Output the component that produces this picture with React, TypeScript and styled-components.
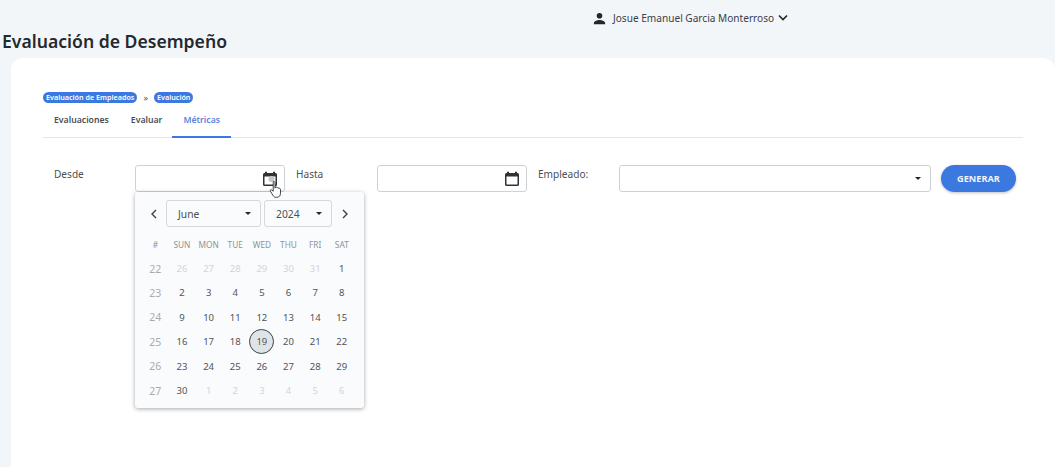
import { Fragment } from "react";
import styled, { createGlobalStyle } from "styled-components";

const GlobalStyle = createGlobalStyle`
  html, body {
    margin: 0;
    padding: 0;
    height: 467px;
    overflow: hidden;
    background: #f3f6f9;
    font-family: "Noto Sans", "Open Sans", sans-serif;
  }
`;

const Page = styled.div`
  display: flex;
  flex-direction: column;
  height: 467px;
  overflow: hidden;
`;

const TopBar = styled.div`
  display: flex;
  align-items: center;
  height: 36px;
  padding-left: 592px;
  gap: 5px;
  font-size: 10.1px;
  color: #3a4047;
`;

const UserName = styled.span`
  margin-left: 1px;
`;

const UserChevron = styled.svg`
  margin-left: -1px;
`;

const Title = styled.h1`
  margin: 0;
  height: 22px;
  padding-left: 2px;
  font-size: 17.6px;
  line-height: 10px;
  font-weight: 600;
  color: #24292f;
`;

const Card = styled.div`
  flex: 1;
  margin-left: 11px;
  padding: 33px 32px 0 32px;
  background: #fff;
  border-radius: 12px 12px 0 0;
`;

const Crumbs = styled.div`
  display: flex;
  align-items: center;
  height: 12px;
  gap: 6px;
  font-size: 9px;
  color: #555;
`;

const Pill = styled.span`
  padding: 0 3px;
  height: 11px;
  line-height: 11px;
  border-radius: 6px;
  background: #3b78e0;
  color: #fff;
  font-size: 7.2px;
  font-weight: 600;
`;

const Tabs = styled.div`
  display: flex;
  height: 34px;
  border-bottom: 1px solid #e4e7ea;
`;

const Tab = styled.div<{ $active?: boolean }>`
  display: flex;
  align-items: center;
  padding: 0 11px;
  margin-left: ${(p) => (p.$active ? "-1px" : "0")};
  height: ${(p) => (p.$active ? "35px" : "34px")};
  box-sizing: border-box;
  font-size: 8.7px;
  font-weight: 600;
  color: ${(p) => (p.$active ? "#5a85dc" : "#4a4f55")};
  border-bottom: ${(p) => (p.$active ? "2px solid #3b78e0" : "none")};
`;

const FilterRow = styled.div`
  display: flex;
  align-items: flex-start;
  margin-top: 27px;
  position: relative;
`;

const Label = styled.div<{ $ml: number }>`
  width: 81px;
  margin-left: ${(p) => p.$ml}px;
  padding-top: 2px;
  font-size: 10.1px;
  line-height: 14px;
  color: #4a4f55;
`;

const Field = styled.div<{ $w: number }>`
  display: flex;
  align-items: center;
  justify-content: flex-end;
  width: ${(p) => p.$w}px;
  height: 27px;
  box-sizing: border-box;
  border: 1px solid #cfd2d5;
  border-radius: 3px;
  background: #fff;
  padding-right: 6px;
`;

const GenerateButton = styled.button`
  width: 75px;
  height: 27px;
  margin-left: 10px;
  border: none;
  border-radius: 14px;
  background: #3b78e0;
  box-shadow: 0 1px 3px rgba(0, 0, 0, 0.25);
  color: #eef3fc;
  font-family: inherit;
  font-size: 9.2px;
  font-weight: 700;
`;

const Caret = styled.span`
  width: 0;
  height: 0;
  margin-right: 3.5px;
  border-left: 3.5px solid transparent;
  border-right: 3.5px solid transparent;
  border-top: 3.5px solid #23272b;
`;

const Popover = styled.div`
  position: absolute;
  left: 92px;
  top: 27px;
  width: 229px;
  height: 216px;
  box-sizing: border-box;
  background: #fafbfd;
  border-radius: 3px;
  box-shadow: 0 1px 4px rgba(0, 0, 0, 0.35);
  z-index: 2;
`;

const MonthBar = styled.div`
  display: flex;
  align-items: center;
  height: 27px;
  padding: 8px 0 0 13px;
`;

const NavButton = styled.span<{ $ml?: number }>`
  display: flex;
  width: 12px;
  margin-left: ${(p) => p.$ml ?? 0}px;
  justify-content: center;
  color: #3a3f44;
`;

const SelectBox = styled.div<{ $w: number; $ml: number }>`
  display: flex;
  align-items: center;
  justify-content: space-between;
  box-sizing: border-box;
  width: ${(p) => p.$w}px;
  height: 27px;
  margin-left: ${(p) => p.$ml}px;
  padding: 0 6px 0 11px;
  border: 1px solid #d5d8db;
  border-radius: 3px;
  font-size: 10.3px;
  color: #4a4f55;
`;

const DayGrid = styled.div`
  display: grid;
  grid-template-columns: repeat(8, 26.65px);
  grid-auto-rows: 24.4px;
  margin: 5px 0 0 7px;
`;

const Cell = styled.div<{ $tone: "head" | "week" | "out" | "in" }>`
  display: flex;
  align-items: center;
  justify-content: center;
  font-size: ${(p) => (p.$tone === "head" ? "8.3px" : p.$tone === "week" ? "10.5px" : "9.5px")};
  color: ${(p) =>
    p.$tone === "head" ? "#8f9397" : p.$tone === "week" ? "#a8abae" : p.$tone === "out" ? "#d3d5d7" : "#505357"};
`;

const TodayMark = styled.span`
  display: flex;
  align-items: center;
  justify-content: center;
  width: 23px;
  height: 23px;
  border: 1px solid #3f4347;
  border-radius: 50%;
  background: #dfe4e8;
`;

const HandCursor = styled.svg`
  position: absolute;
  left: 226px;
  top: 15px;
  z-index: 3;
`;

const CalendarIcon = ({ busy }: { busy?: boolean }) => (
  <svg width="16" height="16" viewBox="0 0 16 16">
    <path
      d="M1 3.5A1.5 1.5 0 0 1 2.5 2H3V.8h2V2h6V.8h2V2h.5A1.5 1.5 0 0 1 15 3.5v10a1.5 1.5 0 0 1-1.5 1.5h-11A1.5 1.5 0 0 1 1 13.5z"
      fill="#2e3338"
    />
    <rect x="2.5" y="5.5" width="11" height="8" fill="#fff" />
    {busy && <circle cx="9.5" cy="8" r="3" fill="#c4c7ca" />}
  </svg>
);

const Chevron = ({ dir }: { dir: "left" | "right" }) => (
  <svg width="8" height="10" viewBox="0 0 8 10" fill="none" stroke="currentColor" strokeWidth="1.4">
    <path d={dir === "left" ? "M6 1 2 5l4 4" : "M2 1l4 4-4 4"} />
  </svg>
);

const heads = ["#", "SUN", "MON", "TUE", "WED", "THU", "FRI", "SAT"];

type Day = { n: number; out?: boolean };
const r = (a: number, b: number, out?: boolean): Day[] =>
  Array.from({ length: b - a + 1 }, (_, i) => ({ n: a + i, out }));

const weeks: { wk: number; days: Day[] }[] = [
  { wk: 22, days: [...r(26, 31, true), ...r(1, 1)] },
  { wk: 23, days: r(2, 8) },
  { wk: 24, days: r(9, 15) },
  { wk: 25, days: r(16, 22) },
  { wk: 26, days: r(23, 29) },
  { wk: 27, days: [...r(30, 30), ...r(1, 6, true)] },
];

export default function App() {
  return (
    <Page>
      <GlobalStyle />
      <TopBar>
        <svg width="15" height="15" viewBox="0 0 24 24" fill="#23272b">
          <path d="M12 12a4.5 4.5 0 1 0 0-9 4.5 4.5 0 0 0 0 9zm0 2.2c-3.3 0-9 1.6-9 4.8V21h18v-2c0-3.2-5.7-4.8-9-4.8z" />
        </svg>
        <UserName>Josue Emanuel Garcia Monterroso</UserName>
        <UserChevron width="10" height="8" viewBox="0 0 10 8" fill="none" stroke="#23272b" strokeWidth="1.6">
          <path d="M1 1.5 5 5.5l4-4" />
        </UserChevron>
      </TopBar>
      <Title>Evaluación de Desempeño</Title>
      <Card>
        <Crumbs>
          <Pill>Evaluación de Empleados</Pill>
          <span>»</span>
          <Pill>Evalución</Pill>
        </Crumbs>
        <Tabs>
          <Tab>Evaluaciones</Tab>
          <Tab>Evaluar</Tab>
          <Tab $active>Métricas</Tab>
        </Tabs>
        <FilterRow>
          <Label $ml={11}>Desde</Label>
          <Field $w={150}>
            <CalendarIcon busy />
          </Field>
          <Label $ml={11}>Hasta</Label>
          <Field $w={150}>
            <CalendarIcon />
          </Field>
          <Label $ml={11}>Empleado:</Label>
          <Field $w={312}>
            <Caret />
          </Field>
          <GenerateButton>GENERAR</GenerateButton>

          <HandCursor width="14" height="19" viewBox="0 0 12 17">
            <path
              d="M3.5 1.5c.8-.6 1.6 0 1.6.8v5l.4-1c.8-.4 1.5 0 1.5.7.7-.5 1.5-.2 1.5.6.7-.4 1.5 0 1.5.8v3.6c0 2.2-1.3 3.5-3.5 3.5H6c-1.3 0-2-.6-2.7-1.7L1 10c-.5-1 .5-1.7 1.3-1.100l1.2 1.2z"
              fill="#fff"
              stroke="#2b2e31"
              strokeWidth="0.8"
            />
          </HandCursor>

          <Popover>
            <MonthBar>
              <NavButton><Chevron dir="left" /></NavButton>
              <SelectBox $w={95} $ml={6}>
                June
                <Caret />
              </SelectBox>
              <SelectBox $w={68} $ml={3}>
                2024
                <Caret />
              </SelectBox>
              <NavButton $ml={7}><Chevron dir="right" /></NavButton>
            </MonthBar>
            <DayGrid>
              {heads.map((h) => (
                <Cell key={h} $tone="head">{h}</Cell>
              ))}
              {weeks.map((w) => (
                <Fragment key={w.wk}>
                  <Cell $tone="week">{w.wk}</Cell>
                  {w.days.map((d) => (
                    <Cell key={d.n} $tone={d.out ? "out" : "in"}>
                      {d.n === 19 ? <TodayMark>19</TodayMark> : d.n}
                    </Cell>
                  ))}
                </Fragment>
              ))}
            </DayGrid>
          </Popover>
        </FilterRow>
      </Card>
    </Page>
  );
}
